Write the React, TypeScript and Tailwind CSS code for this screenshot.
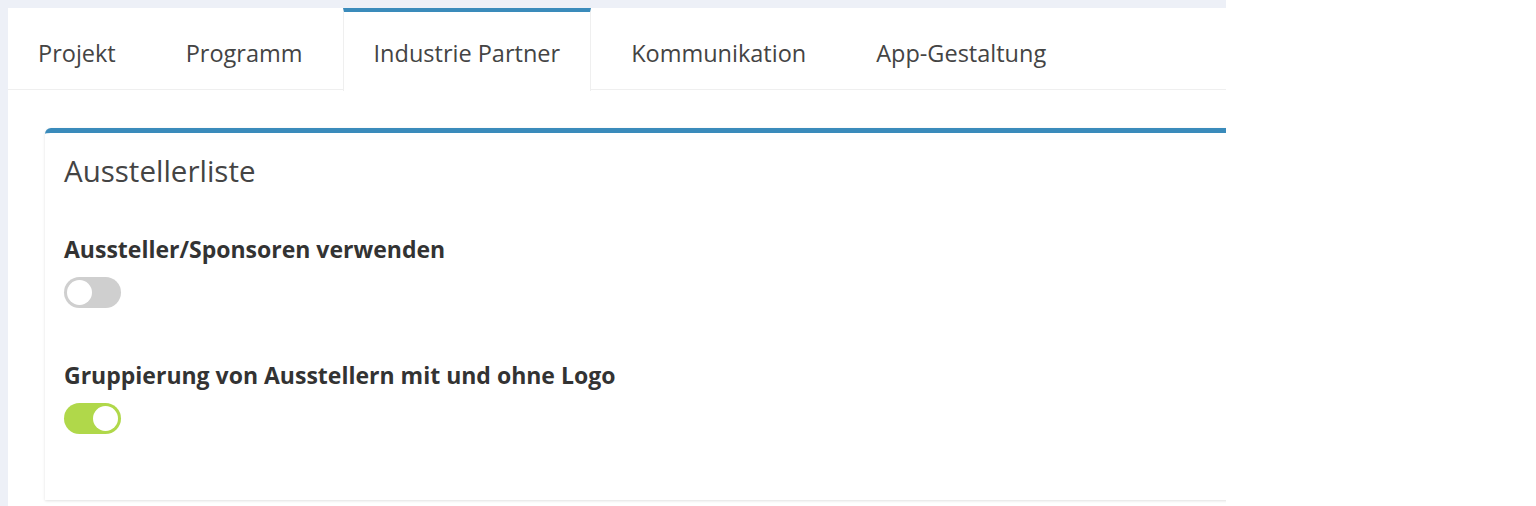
import React from "react"

const tabs = ["Projekt", "Programm", "Industrie Partner", "Kommunikation", "App-Gestaltung"]

function Toggle({ on }: { on: boolean }) {
  return (
    <div
      className={
        on
          ? "w-[57px] h-[31px] rounded-full bg-[#b0d84a] flex items-center justify-end px-[3px]"
          : "w-[57px] h-[31px] rounded-full bg-[#cfcfcf] flex items-center justify-start px-[3px]"
      }
    >
      <div className="w-[25px] h-[25px] rounded-full bg-white" />
    </div>
  )
}

export default function App() {
  const active = 2
  return (
    <div className="flex h-[506px] w-full bg-white font-['Open_Sans',sans-serif]">
      <div className="w-[1226px] bg-[#edf0f7] pt-2 pl-2 flex flex-col">
        <div className="bg-white flex flex-col flex-1 overflow-hidden">
          {/* tab bar */}
          <div className="flex h-[82px] border-b border-[#efefef] shrink-0">
            {tabs.map((t, i) =>
              i === active ? (
                <div
                  key={t}
                  className="px-[30px] mr-[10px] h-[83px] border-t-4 border-x border-t-[#3a8bbb] border-x-[#efefef] bg-white flex items-center pt-[5px] text-[23.5px] text-[#444]"
                >
                  {t}
                </div>
              ) : (
                <div
                  key={t}
                  className="px-[30px] mr-[10px] h-full flex items-center pt-[10px] text-[23.5px] text-[#444]"
                >
                  {t}
                </div>
              )
            )}
          </div>

          {/* content */}
          <div className="pl-[37px] pt-[38px] flex-1">
            <div className="mr-[-40px] h-[372px] bg-white rounded-tl-[6px] border-t-[5px] border-[#3a8bbb] shadow-[0_1px_3px_rgba(0,0,0,0.12)] px-[19px] pt-[20px]">
              <h2 className="text-[29.5px] leading-[36px] text-[#444]">Ausstellerliste</h2>
              <div className="mt-[46px] text-[23px] leading-[28px] font-bold text-[#333]">
                Aussteller/Sponsoren verwenden
              </div>
              <div className="mt-[14px]">
                <Toggle on={false} />
              </div>
              <div className="mt-[53px] text-[23px] leading-[28px] font-bold text-[#333]">
                Gruppierung von Ausstellern mit und ohne Logo
              </div>
              <div className="mt-[14px]">
                <Toggle on={true} />
              </div>
            </div>
          </div>
        </div>
      </div>
    </div>
  )
}
